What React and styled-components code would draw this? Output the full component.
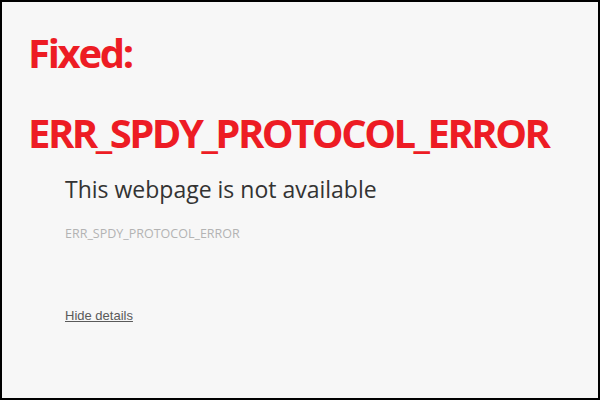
import React from "react";
import styled, { createGlobalStyle } from "styled-components";

const GlobalStyle = createGlobalStyle`
	html, body {
		margin: 0;
		padding: 0;
		background: #f7f7f7;
	}
`;

const Frame = styled.div`
	box-sizing: border-box;
	width: 600px;
	height: 400px;
	border: 2px solid #000;
	background-color: #f7f7f7;
	display: flex;
	flex-direction: column;
	overflow: hidden;
`;

const Headline = styled.div`
	padding: 26px 0 0 26px;
	display: flex;
	flex-direction: column;
	gap: 30px;
`;

const RedLine = styled.div`
	font-family: "Open Sans", sans-serif;
	font-weight: 700;
	font-size: 40px;
	line-height: 50px;
	color: #ed1c24;
	letter-spacing: ${(p) => p.$spacing || "-2px"};
	white-space: nowrap;
`;

const Content = styled.div`
	padding: 16px 0 0 63px;
	display: flex;
	flex-direction: column;
`;

const Title = styled.h1`
	margin: 0;
	font-family: "Open Sans", sans-serif;
	font-weight: 400;
	font-size: 23px;
	line-height: 30px;
	color: #333;
`;

const ErrorCode = styled.div`
	margin-top: 22px;
	font-family: "Open Sans", sans-serif;
	font-size: 12.5px;
	line-height: 16px;
	color: #b3b3b3;
`;

const DetailsLink = styled.a`
	margin-top: 66px;
	align-self: flex-start;
	font-family: "Liberation Sans", Arial, sans-serif;
	font-size: 13px;
	line-height: 16px;
	color: #5a5a5a;
	text-decoration: underline;
	cursor: pointer;
`;

export default function App() {
	return (
		<>
			<GlobalStyle />
			<Frame>
				<Headline>
					<RedLine $spacing="-2.3px">Fixed:</RedLine>
					<RedLine $spacing="-2.5px">ERR_SPDY_PROTOCOL_ERROR</RedLine>
				</Headline>
				<Content>
					<Title>This webpage is not available</Title>
					<ErrorCode>ERR_SPDY_PROTOCOL_ERROR</ErrorCode>
					<DetailsLink>Hide details</DetailsLink>
				</Content>
			</Frame>
		</>
	);
}
